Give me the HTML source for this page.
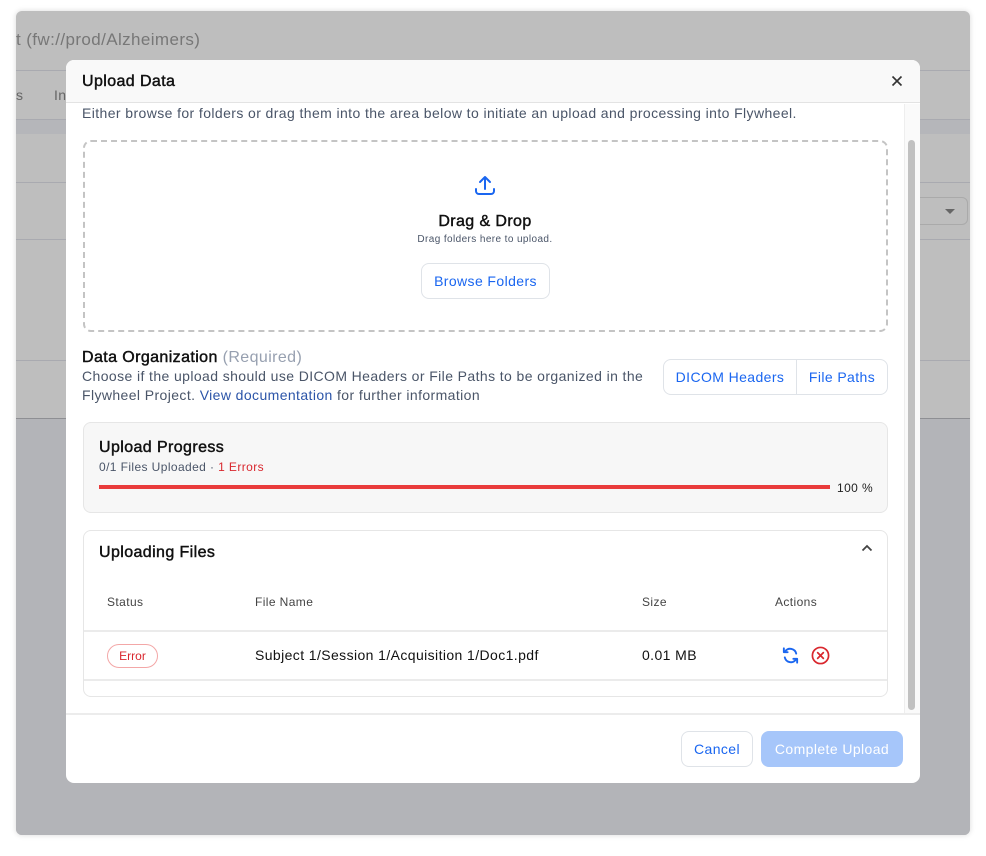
<!DOCTYPE html>
<html><head><meta charset="utf-8">
<style>
*{box-sizing:border-box;margin:0;padding:0}
body{width:986px;height:856px;background:#fff;font-family:"Liberation Sans",sans-serif;position:relative;overflow:hidden;letter-spacing:0.4px}
.a{position:absolute}
.win{left:16px;top:11px;width:954px;height:824px;background:#bebebe;border-radius:6px;overflow:hidden;box-shadow:0 0 6px rgba(0,0,0,.15)}
.modal{left:66px;top:60px;width:854px;height:723px;background:#fff;border-radius:8px;overflow:hidden}
.t{white-space:nowrap}
.h{font-weight:400;-webkit-text-stroke:0.45px #111}
.btn{border:1px solid #dfe3e8;border-radius:8px;background:#fff;color:#1a66f0;font-size:14px;display:flex;align-items:center;justify-content:center}
</style></head><body>
<div class="a win">
  <div class="a t" style="left:0;top:19px;font-size:17px;color:#777">t (fw://prod/Alzheimers)</div>
  <div class="a" style="left:0;top:59px;width:954px;height:1px;background:#a9aab0"></div>
  <div class="a t" style="left:0;top:76px;font-size:14px;color:#666">s</div>
  <div class="a t" style="left:38px;top:76px;font-size:14px;color:#666">In</div>
  <div class="a" style="left:0;top:108px;width:954px;height:1px;background:#a9aab0"></div>
  <div class="a" style="left:0;top:109px;width:954px;height:14px;background:#b5b6ba"></div>
  <div class="a" style="left:0;top:171px;width:954px;height:1px;background:#a9aab0"></div>
  <div class="a" style="left:880px;top:186px;width:72px;height:28px;border:1px solid #aaa;border-radius:6px"></div>
  <div class="a" style="left:929px;top:198px;border-left:5px solid transparent;border-right:5px solid transparent;border-top:5px solid #666"></div>
  <div class="a" style="left:0;top:228px;width:954px;height:1px;background:#a9aab0"></div>
  <div class="a" style="left:0;top:349px;width:954px;height:1px;background:#a9aab0"></div>
  <div class="a" style="left:0;top:407px;width:954px;height:417px;background:#b3b4b8;border-top:1px solid #8e8f93"></div>
</div>

<div class="a modal">
  <div class="a" style="left:0;top:0;width:854px;height:43px;background:#f9f9f9;border-bottom:1px solid #e3e3e3"></div>
  <div class="a t h" style="left:16px;top:13px;font-size:16px;color:#111">Upload Data</div>
  <svg class="a" style="left:825px;top:15px" width="12" height="12" viewBox="0 0 12 12"><path d="M1.5 1.5L10.5 10.5M10.5 1.5L1.5 10.5" stroke="#333" stroke-width="1.6"/></svg>
  <div class="a" style="left:838px;top:44px;width:16px;height:610px;background:#fafafa;border-left:1px solid #eee"></div>
  <div class="a" style="left:842px;top:80px;width:7px;height:570px;background:#c1c1c1;border-radius:4px"></div>

  <div class="a t" style="left:16px;top:45px;font-size:14px;color:#4a5568">Either browse for folders or drag them into the area below to initiate an upload and processing into Flywheel.</div>

  <div class="a" style="left:17px;top:80px;width:805px;height:192px;border:2px dashed #c4c4c4;border-radius:8px"></div>
  <svg class="a" style="left:408px;top:114px" width="22" height="22" viewBox="0 0 22 22"><path d="M11 15V3M6 8l5-5 5 5M2 15v2a3 3 0 0 0 3 3h12a3 3 0 0 0 3-3v-2" stroke="#1a66f0" stroke-width="2" fill="none" stroke-linecap="round" stroke-linejoin="round"/></svg>
  <div class="a t h" style="left:0;width:838px;text-align:center;top:153px;font-size:16px;color:#111">Drag &amp; Drop</div>
  <div class="a t" style="left:0;width:838px;text-align:center;top:174px;font-size:10px;color:#4a5568">Drag folders here to upload.</div>
  <div class="a btn" style="left:355px;top:203px;width:129px;height:36px">Browse Folders</div>

  <div class="a t" style="left:16px;top:289px;font-size:16px;color:#111"><span class="h">Data Organization</span> <span style="color:#97a0b0">(Required)</span></div>
  <div class="a" style="left:16px;top:307px;width:580px;font-size:14px;line-height:19px;color:#4a5568">Choose if the upload should use DICOM Headers or File Paths to be organized in the Flywheel Project. <span style="color:#2b54a8">View documentation</span> for further information</div>
  <div class="a btn" style="left:597px;top:299px;width:225px;height:36px;justify-content:flex-start">
    <div style="width:133px;text-align:center;border-right:1px solid #dfe3e8;line-height:34px">DICOM Headers</div>
    <div style="width:90px;text-align:center">File Paths</div>
  </div>

  <div class="a" style="left:17px;top:362px;width:805px;height:91px;background:#f7f7f7;border:1px solid #e6e6e6;border-radius:8px"></div>
  <div class="a t h" style="left:33px;top:379px;font-size:16px;color:#111">Upload Progress</div>
  <div class="a t" style="left:33px;top:400px;font-size:12px;color:#4a5568">0/1 Files Uploaded · <span style="color:#d9272e">1 Errors</span></div>
  <div class="a" style="left:33px;top:425px;width:731px;height:4px;background:#e93b3b"></div>
  <div class="a t" style="left:771px;top:421px;font-size:12px;color:#222">100 %</div>

  <div class="a" style="left:17px;top:470px;width:805px;height:167px;border:1px solid #e6e6e6;border-radius:8px"></div>
  <div class="a t h" style="left:33px;top:484px;font-size:16px;color:#111">Uploading Files</div>
  <svg class="a" style="left:795px;top:484px" width="12" height="8" viewBox="0 0 12 8"><path d="M1.5 6.5L6 2l4.5 4.5" stroke="#444" stroke-width="1.8" fill="none"/></svg>
  <div class="a t" style="left:41px;top:535px;font-size:12px;color:#444">Status</div>
  <div class="a t" style="left:189px;top:535px;font-size:12px;color:#444">File Name</div>
  <div class="a t" style="left:576px;top:535px;font-size:12px;color:#444">Size</div>
  <div class="a t" style="left:709px;top:535px;font-size:12px;color:#444">Actions</div>
  <div class="a" style="left:18px;top:570px;width:803px;height:2px;background:#ebebeb"></div>
  <div class="a t" style="left:41px;top:584px;width:51px;height:24px;border:1px solid #f3a7a7;border-radius:12px;font-size:12px;color:#d9272e;text-align:center;line-height:22px;letter-spacing:0">Error</div>
  <div class="a t" style="left:189px;top:587px;font-size:14px;color:#111">Subject 1/Session 1/Acquisition 1/Doc1.pdf</div>
  <div class="a t" style="left:576px;top:587px;font-size:14px;color:#111">0.01 MB</div>
  <svg class="a" style="left:715px;top:586px" width="19" height="19" viewBox="0 0 20 20"><path d="M16 8A6.5 6.5 0 0 0 4.5 5.5M4 12a6.5 6.5 0 0 0 11.5 2.5" stroke="#1a66f0" stroke-width="2" fill="none" stroke-linecap="round"/><path d="M3 2.5v4h4M17 17.5v-4h-4" stroke="#1a66f0" stroke-width="2" fill="none" stroke-linecap="round" stroke-linejoin="round"/></svg>
  <svg class="a" style="left:745px;top:586px" width="19" height="19" viewBox="0 0 20 20"><circle cx="10" cy="10" r="8.5" stroke="#d9272e" stroke-width="1.8" fill="none"/><path d="M7 7l6 6M13 7l-6 6" stroke="#d9272e" stroke-width="1.8" stroke-linecap="round"/></svg>
  <div class="a" style="left:18px;top:619px;width:803px;height:2px;background:#ebebeb"></div>

  <div class="a" style="left:0;top:653px;width:854px;height:2px;background:#ececec"></div>
  <div class="a btn" style="left:615px;top:671px;width:72px;height:36px">Cancel</div>
  <div class="a" style="left:695px;top:671px;width:142px;height:36px;background:#a6c6fa;border-radius:8px;color:#fff;font-size:14px;display:flex;align-items:center;justify-content:center">Complete Upload</div>
</div>
</body></html>
